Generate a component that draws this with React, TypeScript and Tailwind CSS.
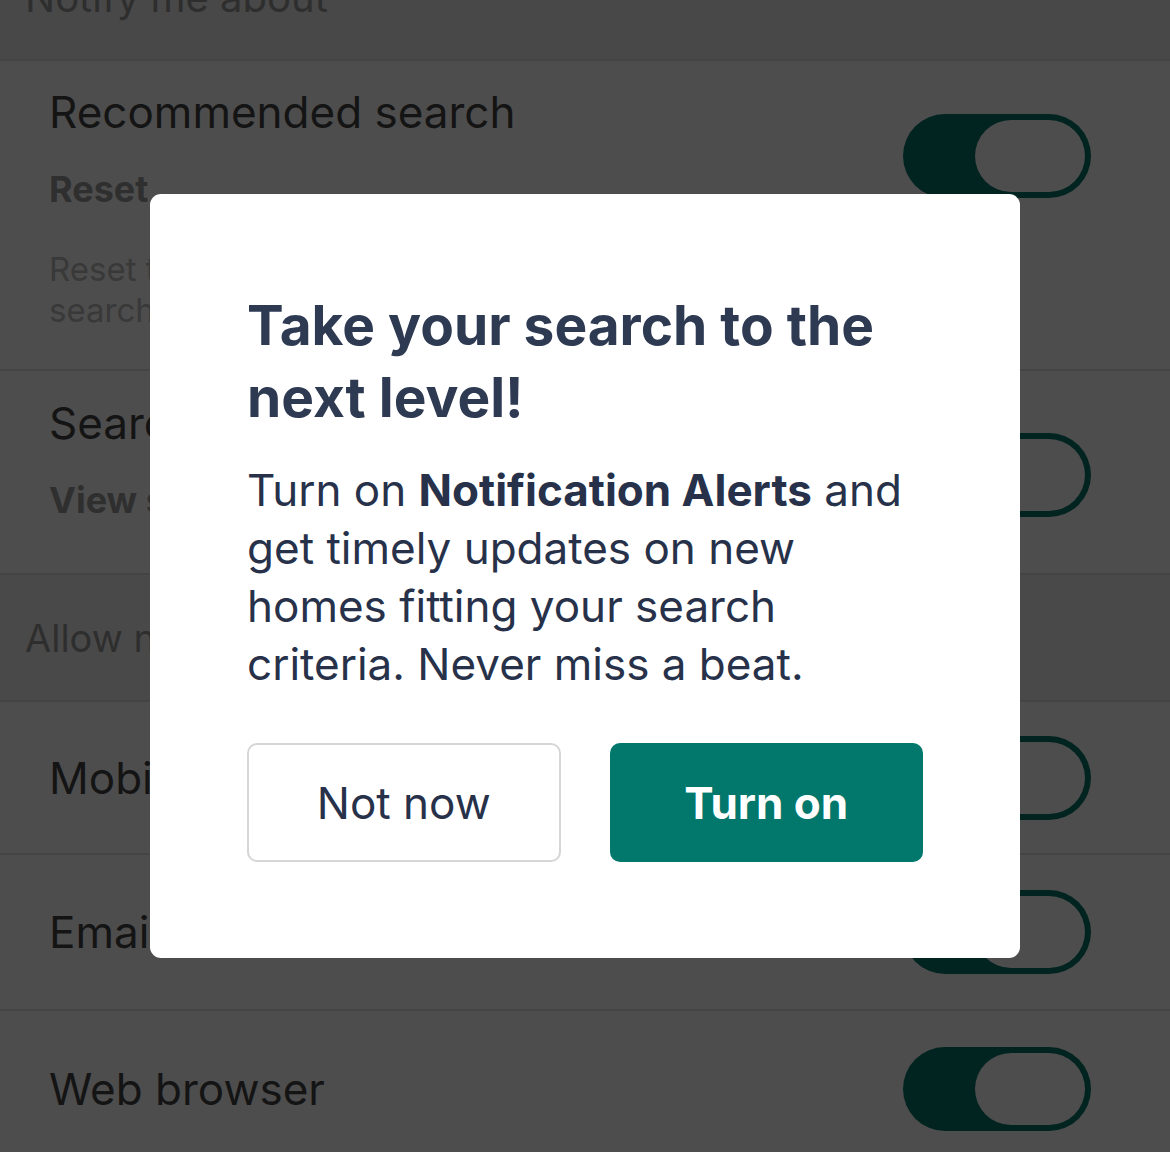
import React from "react";

function Toggle({ className = "" }: { className?: string }) {
  return (
    <div className={`flex h-[84px] w-[188px] shrink-0 items-center justify-end rounded-full bg-[#012420] pr-[6px] ${className}`}>
      <div className="h-[72px] w-[110px] rounded-full bg-[#4d4d4d]" />
    </div>
  );
}

export default function App() {
  const font = { fontFamily: "Inter, 'Open Sans', sans-serif" };
  return (
    <div className="relative h-[1152px] w-[1170px] overflow-hidden bg-[#4d4d4d]" style={font}>
      {/* header band */}
      <div className="flex h-[61px] flex-col border-b-2 border-[#444444] bg-[#484848] pl-[25px]">
        <div className="-mt-[27px] whitespace-nowrap text-[40px] leading-[50px] text-[#2e2e2e]">Notify me about</div>
      </div>

      {/* Recommended search */}
      <div className="flex h-[310px] items-start justify-between border-b-2 border-[#444444] pl-[49px] pr-[79px]">
        <div className="pt-[23px]">
          <div className="whitespace-nowrap text-[44px] leading-[56px] text-[#141414]">Recommended search</div>
          <div className="mt-[27px] whitespace-nowrap text-[36px] font-bold leading-[44px] text-[#2f2f2f]">Reset</div>
          <div className="mt-[38px] whitespace-nowrap text-[33px] leading-[41px] text-[#393939]">
            Reset the recommended
            <br />
            search preferences
          </div>
        </div>
        <Toggle className="mt-[53px]" />
      </div>

      {/* Search alerts */}
      <div className="flex h-[204px] items-start justify-between border-b-2 border-[#444444] pl-[49px] pr-[79px]">
        <div className="pt-[24px]">
          <div className="whitespace-nowrap text-[44px] leading-[56px] text-[#141414]">Search alerts</div>
          <div className="mt-[27px] whitespace-nowrap text-[36px] font-bold leading-[44px] text-[#2f2f2f]">View saved searches</div>
        </div>
        <Toggle className="mt-[62px]" />
      </div>

      {/* Allow band */}
      <div className="h-[127px] border-b-2 border-[#444444] bg-[#494949] pl-[25px] pt-[38px]">
        <div className="whitespace-nowrap text-[38px] leading-[50px] text-[#2e2e2e]">Allow notifications on</div>
      </div>

      {/* Mobile */}
      <div className="flex h-[153px] items-center justify-between border-b-2 border-[#444444] pl-[49px] pr-[79px]">
        <div className="text-[44px] leading-[56px] text-[#141414]">Mobile</div>
        <Toggle />
      </div>

      {/* Email */}
      <div className="flex h-[156px] items-center justify-between border-b-2 border-[#444444] pl-[49px] pr-[79px]">
        <div className="text-[44px] leading-[56px] text-[#141414]">Email</div>
        <Toggle />
      </div>

      {/* Web browser */}
      <div className="flex h-[156px] items-center justify-between pl-[49px] pr-[79px]">
        <div className="text-[44px] leading-[56px] text-[#141414]">Web browser</div>
        <Toggle />
      </div>

      {/* Modal */}
      <div className="absolute left-[150px] top-[194px] w-[870px] rounded-[11px] bg-white px-[97px] pb-[96px] pt-[95px]">
        <h2 className="text-[55px] font-bold leading-[72px] text-[#2d3a52]">
          Take your search to the
          <br />
          next level!
        </h2>
        <p className="mt-[28px] text-[44px] leading-[58px] text-[#27324a]">
          Turn on <span className="font-bold">Notification Alerts</span> and
          <br />
          get timely updates on new
          <br />
          homes fitting your search
          <br />
          criteria. Never miss a beat.
        </p>
        <div className="mt-[50px] flex gap-[49px]">
          <button className="flex h-[119px] w-[314px] items-center justify-center rounded-[10px] border-2 border-[#d6d6d6] bg-white text-[44px] text-[#27324a]">
            Not now
          </button>
          <button className="flex h-[119px] w-[314px] items-center justify-center rounded-[10px] bg-[#02786d] text-[44px] font-bold text-white">
            Turn on
          </button>
        </div>
      </div>
    </div>
  );
}
